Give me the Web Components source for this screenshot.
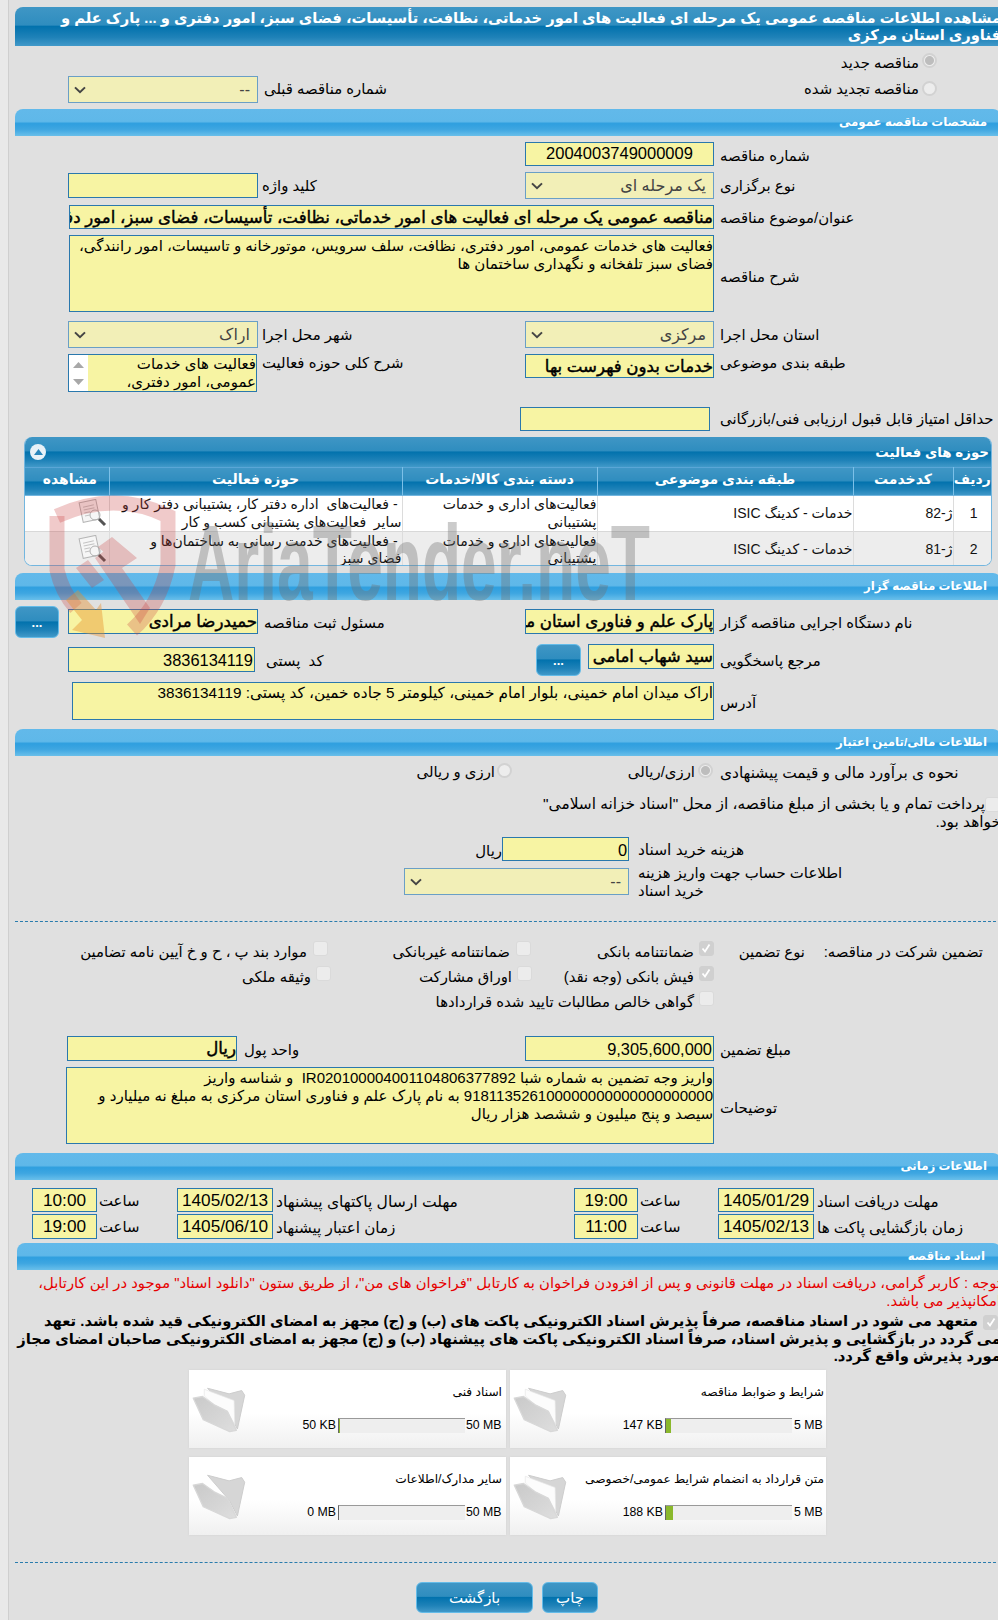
<!DOCTYPE html>
<html lang="fa">
<head>
<meta charset="utf-8">
<title>مشاهده اطلاعات مناقصه</title>
<style>
html,body{margin:0;padding:0;background:#e9e9e9;overflow:hidden;height:1620px}
body{font:14.9px "Liberation Sans","DejaVu Sans",sans-serif;color:#000}
.txt{direction:rtl;text-align:right;white-space:nowrap}
.l{direction:rtl;text-align:left;white-space:nowrap}
</style>
</head>
<body>
<tender-page>
  <page-title>مشاهده اطلاعات مناقصه عمومی یک مرحله ای فعالیت های امور خدماتی، نظافت، تأسیسات، فضای سبز، امور دفتری و ... پارک علم و<br>فناوری استان مرکزی</page-title>

  <t-row style="--cols:910px 18px;margin-top:7px;height:23px;--lt:0px">
    <span class="txt" style="padding-top:0;line-height:20px">مناقصه جدید</span><t-radio checked></t-radio>
  </t-row>
  <t-row style="--cols:59px 190px 6px 200px 455px 18px;height:27px;--lt:5px">
    <span></span><t-select>--</t-select><span></span><span class="l">شماره مناقصه قبلی</span><span class="txt">مناقصه تجدید شده</span><t-radio style="margin-top:5px"></t-radio>
  </t-row>

  <section-bar style="margin-top:6px">مشخصات مناقصه عمومی</section-bar>

  <t-row style="margin-top:6px;--lt:6px">
    <t-input slot="rf" center style="height:24px">2004003749000009</t-input><span slot="rl" class="l">شماره مناقصه</span>
  </t-row>
  <t-row style="margin-top:6px;--lt:6px">
    <t-input slot="lf" style="height:25px;margin-top:1px"></t-input><span slot="ll" class="l">کلید واژه</span>
    <t-select slot="rf">یک مرحله ای</t-select><span slot="rl" class="l">نوع برگزاری</span>
  </t-row>
  <t-row style="margin-top:6px;--lt:5px">
    <t-input slot="rf" bold style="height:24px;width:645px;margin-left:-456px">مناقصه عمومی یک مرحله ای فعالیت های امور خدماتی، نظافت، تأسیسات، فضای سبز، امور دفتری و ... پارک علم و فناوری استان مرکزی</t-input><span slot="rl" class="l">عنوان/موضوع مناقصه</span>
  </t-row>
  <t-row style="margin-top:6px;--lt:34px">
    <t-input slot="rf" wrap style="height:77px;width:645px;margin-left:-456px">فعالیت های خدمات عمومی، امور دفتری، نظافت، سلف سرویس، موتورخانه و تاسیسات، امور رانندگی،<br>فضای سبز تلفخانه و نگهداری ساختمان ها</t-input><span slot="rl" class="l">شرح مناقصه</span>
  </t-row>
  <t-row style="margin-top:9px;--lt:6px">
    <t-select slot="lf" muted>اراک</t-select><span slot="ll" class="l">شهر محل اجرا</span>
    <t-select slot="rf" muted>مرکزی</t-select><span slot="rl" class="l">استان محل اجرا</span>
  </t-row>
  <t-row style="margin-top:6px;--lt:1px">
    <t-list slot="lf">فعالیت های خدمات<br>عمومی، امور دفتری،</t-list><span slot="ll" class="l">شرح کلی حوزه فعالیت</span>
    <t-input slot="rf" bold style="height:24px">خدمات بدون فهرست بها</t-input><span slot="rl" class="l">طبقه بندی موضوعی</span>
  </t-row>
  <t-row style="margin-top:15px;--lt:4px">
    <t-input slot="rf" style="height:24px;width:190px;margin-left:-5px"></t-input><span slot="rl" class="l">حداقل امتیاز قابل قبول ارزیابی فنی/بازرگانی</span>
  </t-row>

  <activity-panel style="margin-top:6px"></activity-panel>

  <section-bar style="margin-top:7px">اطلاعات مناقصه گزار</section-bar>

  <t-row style="margin-top:6px;height:32px;--lt:6px">
    <blue-button slot="g" style="width:44px;height:32px;margin-left:6px">...</blue-button>
    <t-input slot="lf" bold style="height:25px;margin-top:3px">حمیدرضا مرادی</t-input><span slot="ll" class="l" style="margin:3px 0 0 2px">مسئول ثبت مناقصه</span>
    <t-input slot="rf" bold style="height:25px;margin-top:3px">پارک علم و فناوری استان مرکزی</t-input><span slot="rl" class="l" style="margin-top:3px">نام دستگاه اجرایی مناقصه گزار</span>
  </t-row>
  <t-row style="margin-top:6px;height:32px;--lt:6px">
    <t-input slot="lf" num style="height:25px;width:187px;margin-top:3px">3836134119</t-input><span slot="ll" class="l" style="margin:3px 0 0 4px">کد&nbsp; پستی</span>
    <span slot="rf" style="display:flex;gap:7px;width:189px"><blue-button style="width:45px;height:32px;flex:none;margin-left:11px">...</blue-button><t-input bold style="height:25px;flex:1">سید شهاب امامی</t-input></span><span slot="rl" class="l" style="margin-top:3px">مرجع پاسخگویی</span>
  </t-row>
  <t-row style="margin-top:6px;--lt:13px">
    <t-input slot="rf" wrap style="height:38px;width:642px;margin-left:-453px;font-size:15.3px">اراک میدان امام خمینی، بلوار امام خمینی، کیلومتر 5 جاده خمین، کد پستی: 3836134119</t-input><span slot="rl" class="l">آدرس</span>
  </t-row>

  <section-bar style="margin-top:9px">اطلاعات مالی/تامین اعتبار</section-bar>

  <t-row style="--cols:486px 17px 183px 18px 7px 1fr;margin-top:7px;height:20px;--lt:1px">
    <span class="txt">ارزی و ریالی</span><t-radio style="margin-left:3px"></t-radio><span class="txt">ارزی/ریالی</span><t-radio checked style="margin-left:4px"></t-radio><span></span><span class="l" style="font-size:15.4px">نحوه ی برآورد مالی و قیمت پیشنهادی</span>
  </t-row>
  <div class="txt" style="margin-top:12px;height:36px;line-height:18px;font-size:15.4px"><t-check style="margin:-4px 1px -4px 0;vertical-align:middle"></t-check>پرداخت تمام و یا بخشی از مبلغ مناقصه، از محل "اسناد خزانه اسلامی"<br>خواهد بود.</div>
  <t-row style="--cols:470px 23px 127px 9px 1fr;margin-top:6px;--lt:4px">
    <span></span><span class="txt" style="padding-top:6px">ریال</span><t-input num style="height:24px">0</t-input><span></span><span class="l" style="font-size:15.4px">هزینه خرید اسناد</span>
  </t-row>
  <t-row style="--cols:395px 225px 9px 1fr;margin-top:3px;--lt:0px">
    <span></span><t-select style="margin-top:4px;width:225px">--</t-select><span></span><span class="l" style="line-height:18px">اطلاعات حساب جهت واریز هزینه<br>خرید اسناد</span>
  </t-row>

  <dash-line style="margin-top:21px"></dash-line>

  <t-row style="--cols:298px 21px 182px 21px 163px 20px 91px 178px;margin-top:19px;height:25px;--lt:3px">
    <span class="txt">موارد بند پ ، ح و خ آیین نامه تضامین</span><t-check></t-check><span class="txt">ضمانتنامه غیربانکی</span><t-check></t-check><span class="txt">ضمانتنامه بانکی</span><t-check checked></t-check><span class="txt">نوع تضمین</span><span class="txt">تضمین شرکت در مناقصه:</span>
  </t-row>
  <t-row style="--cols:302px 20px 181px 20px 162px 20px;height:25px;--lt:3px">
    <span class="txt">وثیقه ملکی</span><t-check></t-check><span class="txt">اوراق مشارکت</span><t-check></t-check><span class="txt">فیش بانکی (وجه نقد)</span><t-check checked></t-check>
  </t-row>
  <t-row style="--cols:685px 20px;height:25px;--lt:3px">
    <span class="txt">گواهی خالص مطالبات تایید شده قراردادها</span><t-check></t-check>
  </t-row>

  <t-row style="margin-top:20px;--lt:6px">
    <t-input slot="lf" bold style="height:25px;width:170px;margin-left:-1px">ریال</t-input><span slot="ll" class="l" style="margin-left:-18px">واحد پول</span>
    <t-input slot="rf" num style="height:25px">9,305,600,000</t-input><span slot="rl" class="l">مبلغ تضمین</span>
  </t-row>
  <t-row style="margin-top:6px;--lt:33px">
    <t-input slot="rf" wrap style="height:77px;width:648px;margin-left:-459px">واریز وجه تضمین به شماره شبا IR020100004001104806377892&nbsp; و شناسه واریز<br>918113526100000000000000000000 به نام پارک علم و فناوری استان مرکزی به مبلغ نه میلیارد و<br>سیصد و پنج میلیون و ششصد هزار ریال</t-input><span slot="rl" class="l">توضیحات</span>
  </t-row>

  <section-bar style="margin-top:9px">اطلاعات زمانی</section-bar>

  <t-row style="--cols:23px 65px 80px 96px 301px 64px 80px 96px 1fr;margin-top:8px;height:24px;--lt:5px">
    <span></span><t-input clock style="height:24px">10:00</t-input><span class="l" style="padding-left:2px">ساعت</span><t-input clock style="height:24px">1405/02/13</t-input><span class="l" style="padding-left:3px;font-size:15.6px">مهلت ارسال پاکتهای پیشنهاد</span><t-input clock style="height:24px">19:00</t-input><span class="l" style="padding-left:2px">ساعت</span><t-input clock style="height:24px">1405/01/29</t-input><span class="l" style="padding-left:3px;font-size:15.2px">مهلت دریافت اسناد</span>
  </t-row>
  <t-row style="--cols:23px 65px 80px 96px 301px 64px 80px 96px 1fr;margin-top:2px;height:25px;--lt:5px">
    <span></span><t-input clock style="height:25px">19:00</t-input><span class="l" style="padding-left:2px">ساعت</span><t-input clock style="height:25px">1405/06/10</t-input><span class="l" style="padding-left:3px;font-size:15.2px">زمان اعتبار پیشنهاد</span><t-input clock style="height:25px">11:00</t-input><span class="l" style="padding-left:2px">ساعت</span><t-input clock style="height:25px">1405/02/13</t-input><span class="l" style="padding-left:3px;font-size:15.2px">زمان بازگشایی پاکت ها</span>
  </t-row>

  <section-bar style="margin-top:4px;margin-left:8px;padding-right:16px">اسناد مناقصه</section-bar>

  <div class="txt" style="margin-top:4px;line-height:18px;color:#e60000;font-size:14.8px">توجه : کاربر گرامی، دریافت اسناد در مهلت قانونی و پس از افزودن فراخوان به کارتابل "فراخوان های من"، از طریق ستون "دانلود اسناد" موجود در این کارتابل،<br>امکانپذیر می باشد.</div>
  <div class="txt" style="margin-top:3px;height:53px;line-height:17.5px;font-weight:bold;font-size:14.8px"><t-check checked style="margin:-4px 3px -4px 5px;vertical-align:middle"></t-check>متعهد می شود در اسناد مناقصه، صرفاً پذیرش اسناد الکترونیکی پاکت های (ب) و (ج) مجهز به امضای الکترونیکی قید شده باشد. تعهد<br>می گردد در بازگشایی و پذیرش اسناد، صرفاً اسناد الکترونیکی پاکت های پیشنهاد (ب) و (ج) مجهز به امضای الکترونیکی صاحبان امضای مجاز<br>مورد پذیرش واقع گردد.</div>

  <doc-grid style="margin-top:4px">
    <doc-card left min="50 KB" max="50 MB" fill="1">اسناد فنی</doc-card>
    <doc-card min="147 KB" max="5 MB" fill="5">شرایط و ضوابط مناقصه</doc-card>
    <doc-card left min="0 MB" max="50 MB" fill="0" empty>سایر مدارک/اطلاعات</doc-card>
    <doc-card min="188 KB" max="5 MB" fill="7">متن قرارداد به انضمام شرایط عمومی/خصوصی</doc-card>
  </doc-grid>

  <dash-line style="margin-top:27px"></dash-line>

  <t-row style="--cols:407px 117px 9px 56px;margin-top:19px">
    <span></span><blue-button big style="height:31px">بازگشت</blue-button><span></span><blue-button big style="height:31px">چاپ</blue-button>
  </t-row>

  <water-mark></water-mark>
</tender-page>

<script>
const HEADGRAD='linear-gradient(#3f96c5 0,#2f8dbf 46%,#0272ad 50%,#1f82b8 78%,#4199c9 100%)';

class Base extends HTMLElement{
    constructor(){
        super();
        this.attachShadow({mode:'open'});
        this.shadowRoot.innerHTML=this.render();
    }
    render(){ return '<slot></slot>'; }
}

class TenderPage extends Base{
    render(){ return `<style>
:host{display:block;position:relative;box-sizing:border-box;width:993px;height:1620px;margin-left:8px;border-left:1px solid #cfcfcf;background:#e0e0e0;padding-top:7px}
</style><slot></slot>`; }
}

class PageTitle extends Base{
    render(){ return `<style>
:host{display:block;margin-left:6px;height:39px;box-sizing:border-box;padding-top:3px;background:${HEADGRAD};color:#fff;font:bold 14.7px/17px "Liberation Sans","DejaVu Sans",sans-serif;direction:rtl;text-align:right;white-space:nowrap;border-top-left-radius:8px}
</style><slot></slot>`; }
}

class SectionBar extends Base{
    render(){ return `<style>
:host{display:block;margin-left:6px;height:27px;box-sizing:border-box;padding:0 14px 0 0;background:linear-gradient(#62b9ea 0,#5fb8e9 46%,#2f9fdf 54%,#3ea6e1 75%,#69bfea 100%);color:#fff;font:bold 11.8px/27px "Liberation Sans","DejaVu Sans",sans-serif;direction:rtl;text-align:right;white-space:nowrap;border-top-left-radius:8px;border-top-right-radius:8px}
</style><slot></slot>`; }
}

class TRow extends Base{
    render(){ return `<style>
:host{display:grid;grid-template-columns:var(--cols,59px 190px 4px 263px 189px 6px 1fr);align-items:start;direction:ltr;line-height:17px}
::slotted([slot=g]){grid-column:1;grid-row:1}
::slotted([slot=lf]){grid-column:2;grid-row:1}
::slotted([slot=ll]){grid-column:4;grid-row:1}
::slotted([slot=rf]){grid-column:5;grid-row:1}
::slotted([slot=rl]){grid-column:7;grid-row:1}
::slotted(span.l),::slotted(span.txt){padding-top:var(--lt,3px)}
</style><slot name="g"></slot><slot name="lf"></slot><slot name="ll"></slot><slot name="rf"></slot><slot name="rl"></slot><slot></slot>`; }
}

class TInput extends Base{
    render(){ return `<style>
:host{display:block;box-sizing:border-box;border:1.5px solid #2a78ad;background:#f7f4a3;direction:rtl;text-align:right;white-space:nowrap;overflow:hidden;font:15px/23px "Liberation Sans","DejaVu Sans",sans-serif;color:#000;padding:0}
:host([bold]){font-size:16.6px;-webkit-text-stroke:.45px #000}
:host([center]){text-align:center;font-size:16.5px;line-height:21px}
:host([clock]){text-align:center;font-size:17.2px;line-height:23px}
:host([num]){font-size:16.4px;padding-right:1px;line-height:24px}
:host([wrap]){line-height:18px;padding-top:1px}
</style><slot></slot>`; }
}

class TSelect extends Base{
    render(){ return `<style>
:host{display:flex;box-sizing:border-box;height:27px;border:1.5px solid #6a9fc6;background:#f2efb7;direction:rtl;align-items:center;padding:0 7px 0 5px;white-space:nowrap;font:16px "Liberation Sans","DejaVu Sans",sans-serif;color:#444}
svg{margin-right:auto;flex:none}
</style><slot></slot><svg width="12" height="8" viewBox="0 0 12 8"><path d="M1 1.4 6 6.2 11 1.4" fill="none" stroke="#444" stroke-width="2"/></svg>`; }
}

class TList extends Base{
    render(){ return `<style>
:host{display:flex;box-sizing:border-box;height:38px;width:189px;border:1.5px solid #2a78ad;background:#f7f4a3;direction:ltr;overflow:hidden;font:15px/18px "Liberation Sans","DejaVu Sans",sans-serif}
.bar{flex:none;width:19px;background:#fff;display:flex;flex-direction:column;justify-content:space-between;align-items:center;padding:7px 0 6px;box-sizing:border-box}
.txt{flex:1;direction:rtl;text-align:right;white-space:nowrap}
</style><div class="bar"><svg width="11" height="6" viewBox="0 0 11 6"><path d="M5.5 0 11 6H0z" fill="#a8a8a8"/></svg><svg width="11" height="6" viewBox="0 0 11 6"><path d="M0 0H11L5.5 6z" fill="#a8a8a8"/></svg></div><div class="txt"><slot></slot></div>`; }
}

class TRadio extends Base{
    render(){ return `<style>
:host{display:block;box-sizing:border-box;width:15px;height:15px;border-radius:50%;border:2px solid #d2d2d2;background:#ededed;justify-self:end}
:host([checked]){background:radial-gradient(circle,#bdbdbd 0 4px,#ededed 5px)}
</style>`; }
}

class TCheck extends Base{
    render(){ return `<style>
:host{display:inline-block;box-sizing:border-box;width:15px;height:15px;border-radius:3px;border:1.5px solid #dadada;background:#ececec;justify-self:end}
:host([checked]){background:#d0d0d0;border-color:#d0d0d0}
svg{display:none;width:12px;height:12px}
:host([checked]) svg{display:block}
</style><svg viewBox="0 0 12 12"><path d="M2.5 6.5 5 9.5 9.5 2.5" fill="none" stroke="#fff" stroke-width="1.8"/></svg>`; }
}

class BlueButton extends Base{
    render(){ return `<style>
:host{display:flex;align-items:center;justify-content:center;box-sizing:border-box;border:1.5px solid #63bbe8;border-radius:6px;background:${HEADGRAD};color:#fff;font:bold 13px "Liberation Sans","DejaVu Sans",sans-serif;direction:rtl}
:host([big]){font:15px "Liberation Sans","DejaVu Sans",sans-serif}
</style><slot></slot>`; }
}

class DashLine extends Base{
    render(){ return `<style>
:host{display:block;margin-left:6px;border-top:1px dashed #2a7cad;height:0}
</style>`; }
}

class ActivityPanel extends Base{
    render(){
        const icon=`<svg width="32" height="30" viewBox="0 0 32 30"><g transform="rotate(-12 12 12)"><rect x="4" y="2" width="17" height="20" fill="#f6f6f6" stroke="#b5b5b5"/><path d="M7 7h11M7 10h11M7 13h6M7 16h5" stroke="#c4c4c4"/></g><circle cx="18" cy="16" r="5" fill="none" stroke="#b0b0b0"/><path d="M22 20l6 6" stroke="#555" stroke-width="3"/></svg>`;
        return `<style>
:host{display:block;box-sizing:border-box;margin-left:15px;width:968px;height:129px;border:1px solid #73b6df;border-top:0;border-radius:8px;overflow:hidden;background:#fff}
.head{height:30px;background:${HEADGRAD};color:#fff;direction:rtl;display:flex;justify-content:space-between;align-items:center;padding:0 0 0 5px;font:bold 13.4px "Liberation Sans","DejaVu Sans",sans-serif;box-sizing:border-box}
.head span{margin-right:2px}
.toggle{width:16px;height:16px;border-radius:50%;background:#e8f1f7;display:flex;align-items:center;justify-content:center}
table{width:100%;border-collapse:collapse;direction:rtl;table-layout:fixed;font:14px/17.5px "Liberation Sans","DejaVu Sans",sans-serif}
th{height:28px;padding:0 0 3px;box-sizing:border-box;background:${HEADGRAD};color:#fff;font-weight:bold;font-size:14px;border-left:1px solid #7cc0e8;border-top:1px solid #5aa6d6;border-bottom:1px solid #73b6df;text-align:center}
td{height:35px;padding:0 0 0 3px;border-left:1px solid #dcdcdc;text-align:right;color:#111;vertical-align:middle;white-space:nowrap;overflow:hidden}
tr.b td{background:#ededed;border-top:1px solid #d8d8d8;height:36px}
td.c{text-align:center}
td.i{padding:0;text-align:left;border-left:0}
td.i svg{display:block;margin-left:50px}
th:last-child{border-left:0;padding-left:6px}
</style>
<div class="head"><span>حوزه های فعالیت</span><div class="toggle"><svg width="9" height="6" viewBox="0 0 9 6"><path d="M4.5 0 9 6H0z" fill="#2b86bb"/></svg></div></div>
<table><colgroup><col style="width:38px"><col style="width:100px"><col style="width:256px"><col style="width:195px"><col style="width:293px"><col></colgroup>
<tr><th>ردیف</th><th>کدخدمت</th><th>طبقه بندی موضوعی</th><th>دسته بندی کالا/خدمات</th><th>حوزه فعالیت</th><th>مشاهده</th></tr>
<tr><td class="c">1</td><td>ژ-82</td><td>خدمات - کدینگ ISIC</td><td>فعالیت‌های اداری و خدمات<br>پشتیبانی</td><td>&nbsp;- فعالیت‌های&nbsp; اداره دفتر کار، پشتیبانی دفتر کار و<br>سایر&nbsp; فعالیت‌های پشتیبانی کسب و کار</td><td class="i">${icon}</td></tr>
<tr class="b"><td class="c">2</td><td>ژ-81</td><td>خدمات - کدینگ ISIC</td><td>فعالیت‌های اداری و خدمات<br>پشتیبانی</td><td>&nbsp;- فعالیت‌های خدمت رسانی به ساختمان‌ها و<br>فضای سبز</td><td class="i">${icon}</td></tr>
</table>`;
    }
}

class DocGrid extends Base{
    render(){ return `<style>
:host{display:grid;grid-template-columns:317px 316px;column-gap:4px;row-gap:9px;margin-left:180px;width:637px}
</style><slot></slot>`; }
}

class DocCard extends Base{
    render(){
        const g=this.getAttribute('fill')||0;
        const paper=this.hasAttribute('empty')?'':'<path d="M45 58 135 92 137 165 115 125 75 105 45 78z" fill="#fcfcfc" stroke="#e6e6e6" stroke-width="2"/>';
        return `<style>
:host{display:grid;grid-template-columns:62px 93px 127px 1fr;grid-template-rows:48px 30px;height:78px;background:linear-gradient(#fff 0,#fff 55%,#f0f0f0 100%);box-shadow:0 0 2px #cfcfcf;font:12.3px "Liberation Sans","DejaVu Sans",sans-serif;direction:ltr;white-space:nowrap}
:host([left]){grid-template-columns:56px 93px 127px 1fr}
:host([left]) .t{padding-right:4px}
:host([left]) .max{padding-left:1px}
svg.f{grid-column:1;grid-row:1 / 3;filter:blur(.5px);overflow:visible}
.t{grid-column:2 / 5;grid-row:1;direction:rtl;text-align:right;padding:15px 2px 0 0;font-size:12.2px}
.min{grid-column:2;grid-row:2;text-align:right;padding-right:2px;line-height:15px}
.bar{grid-column:3;grid-row:2;height:15px;box-sizing:border-box;background:#eee;border-top:1px solid #999;border-left:1px solid #666}
.bar i{display:block;height:14px;background:#8ab82c;width:${g}px}
.max{grid-column:4;grid-row:2;padding-left:2px;line-height:15px}
</style>
<svg class="f" width="57" height="63" viewBox="0 0 170 190"><defs><linearGradient id="fl" x1="0" y1="0" x2="1" y2="1"><stop offset="0" stop-color="#c9c9c9"/><stop offset="1" stop-color="#dedede"/></linearGradient></defs><path d="M55 55 120 72 158 62 167 76 145 178 120 130z" fill="#d6d6d6" stroke="#cdcdcd" stroke-width="3" stroke-linejoin="round"/>${paper}<path d="M12 85 40 80 75 105 115 125 142 182 122 186 42 150z" fill="url(#fl)" stroke="#d8d8d8" stroke-width="4" stroke-linejoin="round"/></svg>
<div class="t"><slot></slot></div>
<div class="min">${this.getAttribute('min')}</div><div class="bar"><i></i></div><div class="max">${this.getAttribute('max')}</div>`;
    }
}

// the site's faded logo lies over the form
class WaterMark extends Base{
    render(){ return `<style>
:host{position:absolute;left:-9px;top:0;width:998px;height:1620px;pointer-events:none}
svg{display:block}
</style>
<svg width="998" height="1620" viewBox="0 0 998 1620">
<path d="M57 516Q115 490 168 516V565Q160 605 132 630" fill="none" stroke="#c83c3c" stroke-opacity=".27" stroke-width="15"/>
<path d="M57 516V570Q62 592 76 608" fill="none" stroke="#c83c3c" stroke-opacity=".27" stroke-width="15"/>
<path d="M112 537 137 558 122 568 98 547zM76 568 88 560 104 580 92 588zM95 558 108 548 150 608 140 624z" fill="#c83c3c" fill-opacity=".27"/>
<path d="M66 600 78 590 96 610 101 603 105 638 72 630 82 620z" fill="#e8902c" fill-opacity=".42"/>
<text x="188" y="600" font-family="Liberation Sans" font-weight="bold" font-size="108" fill="#6e6e6e" fill-opacity=".36" textLength="462" lengthAdjust="spacingAndGlyphs">AriaTender.neT</text>
</svg>`; }
}

customElements.define('tender-page',TenderPage);
customElements.define('page-title',PageTitle);
customElements.define('section-bar',SectionBar);
customElements.define('t-row',TRow);
customElements.define('t-input',TInput);
customElements.define('t-select',TSelect);
customElements.define('t-list',TList);
customElements.define('t-radio',TRadio);
customElements.define('t-check',TCheck);
customElements.define('blue-button',BlueButton);
customElements.define('dash-line',DashLine);
customElements.define('activity-panel',ActivityPanel);
customElements.define('doc-grid',DocGrid);
customElements.define('doc-card',DocCard);
customElements.define('water-mark',WaterMark);
</script>
</body>
</html>
